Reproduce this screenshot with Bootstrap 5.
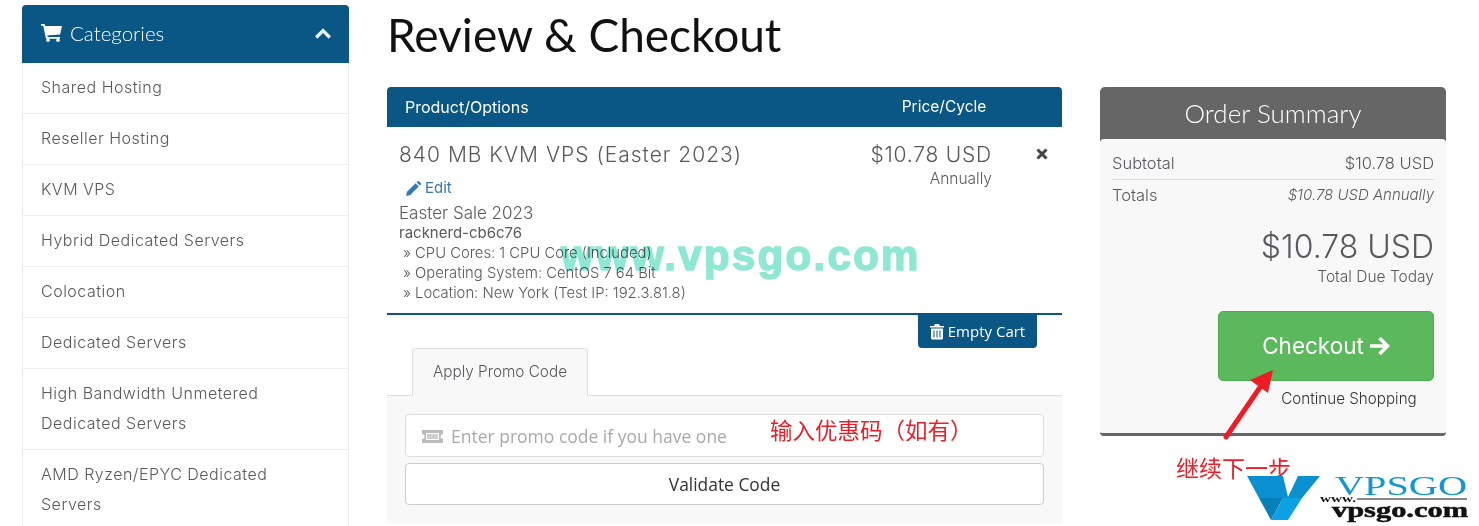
<!DOCTYPE html>
<html lang="en">
<head>
  <meta charset="UTF-8" />
  <meta name="viewport" content="width=device-width, initial-scale=1.0"/>
  <title>Review &amp; Checkout</title>
  <link href="https://cdn.jsdelivr.net/npm/bootstrap@5.3.0/dist/css/bootstrap.min.css" rel="stylesheet"/>
  <style>
    html, body { height: 526px; overflow: hidden; background: #fff; }
    body { font-family: Inter, "Noto Sans", sans-serif; font-weight: 300; color: #58595b; font-size: 16px; position: relative; }
    .page-wrap { padding-left: 22px; padding-top: 5px; gap: 38px; }

    .side-col { width: 327px; flex: none; }
    .side-head { height: 58px; background: #0a5685; color: #fff; border-radius: 4px 4px 0 0; padding: 0 18px 2px 19px; font-size: 20.5px; font-family: Lato, sans-serif; font-weight: 300; }
    .side-link { padding: 9px 18px 0; line-height: 30px; height: 51px; border: solid #eee; border-width: 0 1px 1px; box-sizing: border-box; font-size: 16px; letter-spacing: .5px; color: #58595b; }
    .side-link.tall { height: 81px; }

    .main-col { width: 1059px; flex: none; }
    .page-title { font-family: Lato, sans-serif; font-weight: 400; font-size: 46px; line-height: 60px; margin: 0 0 22px; color: #111; }
    .cart-col { width: 675px; flex: none; }
    .cart-head { height: 40px; background: #0a5685; color: #fff; border-radius: 4px 4px 0 0; padding: 0 18px; font-size: 16px; font-weight: 400; }
    .price-head { width: 130px; text-align: center; margin-right: 35px; font-size: 15.5px; }
    .cart-row { height: 188px; border-bottom: 2px solid #0a5685; padding: 15px 12px 0; }
    .prod-name { font-size: 21px; letter-spacing: 1px; line-height: 26px; }
    .edit-link { color: #337ab7; font-size: 15px; padding: 10px 0 0 7px; line-height: 20px; font-weight: 400; }
    .prod-group { font-size: 17px; line-height: 20px; margin-top: 5px; }
    .prod-domain { font-size: 15px; line-height: 19px; font-weight: 400; }
    .prod-opt { font-size: 14.8px; line-height: 20px; padding-left: 4px; }
    .prod-opt.first { margin-top: 1px; }
    .price-box { width: 150px; text-align: right; margin-right: 58px; }
    .price-main { font-size: 21px; letter-spacing: .8px; line-height: 26px; }
    .price-cycle { font-size: 15.5px; line-height: 22px; }
    .remove-x { position: absolute; top: 21px; right: 14px; }
    .empty-btn { width: 119px; height: 33px; margin-right: 25px; background: #0a5685; color: #fff; border-radius: 0 0 4px 4px; font-size: 15px; font-weight: 400; font-family: "Open Sans", sans-serif; }
    .promo-tabs { padding-left: 25px; border-bottom: 1px solid #ddd; height: 48px; }
    .promo-tab { width: 176px; height: 48px; background: #f8f8f8; border: 1px solid #ddd; border-bottom: 0; border-radius: 4px 4px 0 0; font-size: 15.3px; }
    .promo-body { background: #f8f8f8; padding: 18px; height: 128px; }
    .promo-input { height: 43px; background: #fff; border: 1px solid #ddd; border-radius: 4px; padding: 2px 0 0 16px; margin-bottom: 6px; color: #a9a9a9; font-family: "Open Sans", sans-serif; font-weight: 400; font-size: 17.5px; }
    .promo-btn { height: 42px; background: #fff; border: 1px solid #ccc; border-radius: 4px; padding-top: 1px; color: #333; font-family: "Open Sans", sans-serif; font-weight: 400; font-size: 17.4px; }

    .sum-col { width: 346px; flex: none; }
    .sum-head { height: 56px; padding-bottom: 4px; margin-bottom: -4px; background: #666; color: #fff; border-radius: 5px 5px 0 0; font-family: Lato, sans-serif; font-weight: 300; font-size: 26px; }
    .sum-body { height: 297px; background: #f8f8f8; border-bottom: 3px solid #666; border-radius: 4px; padding: 13px 12px 0; position: relative; }
    .sum-line { font-size: 16.5px; line-height: 22px; }
    .sum-line em { font-size: 15px; }
    .sum-line.first { border-bottom: 1px solid #ddd; height: 28px; }
    .sum-line.second { padding-top: 4px; }
    .sum-total { text-align: right; font-size: 32px; line-height: 40px; margin-top: 21px; }
    .sum-due { text-align: right; font-size: 15.5px; line-height: 20px; }
    .go-btn { width: 216px; height: 70px; margin: 24px 0 0 auto; background: #5cb85c; border: 1px solid #4cae4c; border-radius: 5px; color: #fff; font-size: 22.5px; font-weight: 400; gap: 5px; }
    .go-more { width: 216px; margin-left: auto; padding-left: 46px; text-align: center; font-size: 15.2px; line-height: 20px; margin-top: 8px; color: #333; }

    .watermark { position: absolute; left: 561px; top: 229px; font-family: "Liberation Sans", sans-serif; font-weight: 700; font-size: 42px; line-height: 54px; letter-spacing: 2.3px; color: #8ee8d3; -webkit-text-stroke: 1.5px #8ee8d3; mix-blend-mode: multiply; }
    .note-red { position: absolute; color: #ee1c25; font-family: "Noto Sans CJK SC", sans-serif; font-weight: 400; font-size: 22.5px; line-height: 28px; white-space: nowrap; }
    .note-promo { left: 770px; top: 415px; }
    .note-next { left: 1176px; top: 453px; font-size: 23px; text-shadow: 0 0 2px #fff; }
    .arrow-red { position: absolute; left: 1218px; top: 365px; }
    .logo-mark { position: absolute; left: 1247px; top: 472px; }
  </style>
</head>
<body>
  <div class="d-flex page-wrap">
    <div class="side-col">
      <div class="side-head d-flex align-items-center justify-content-between">
        <div class="d-flex align-items-center gap-2">
          <svg width="21" height="18" viewBox="0 0 21 18" fill="#fff"><path d="M0 0h3.6l.6 2H21l-1.9 8.4-12.8 1.1.4 1.5H19v1.8H5L2.2 1.8H0z"/><circle cx="7" cy="16.2" r="1.8"/><circle cx="17" cy="16.2" r="1.8"/></svg>
          <span>Categories</span>
        </div>
        <svg width="16" height="11" viewBox="0 0 16 11" fill="none" stroke="#e8eef2" stroke-width="3.4"><path d="M1.2 9.5 8 2.6l6.8 6.9"/></svg>
      </div>
      <div class="side-link">Shared Hosting</div>
      <div class="side-link">Reseller Hosting</div>
      <div class="side-link">KVM VPS</div>
      <div class="side-link">Hybrid Dedicated Servers</div>
      <div class="side-link">Colocation</div>
      <div class="side-link">Dedicated Servers</div>
      <div class="side-link tall">High Bandwidth Unmetered Dedicated Servers</div>
      <div class="side-link tall">AMD Ryzen/EPYC Dedicated Servers</div>
    </div>

    <div class="main-col">
      <h1 class="page-title">Review &amp; Checkout</h1>
      <div class="d-flex justify-content-between">
        <div class="cart-col">
          <div class="cart-head d-flex align-items-center justify-content-between">
            <span>Product/Options</span>
            <span class="price-head">Price/Cycle</span>
          </div>
          <div class="cart-row d-flex justify-content-between position-relative">
            <div>
              <div class="prod-name">840 MB KVM VPS (Easter 2023)</div>
              <div class="edit-link d-flex align-items-center gap-1">
                <svg width="15" height="15" viewBox="0 0 15 15" fill="#337ab7"><path d="M0 15l1-4.2 8.6-8.6 3.2 3.2L4.2 14zM10.6 1.2l1-1a1 1 0 0 1 1.3 0l1.9 1.9a1 1 0 0 1 0 1.3l-1 1z"/></svg>
                <span>Edit</span>
              </div>
              <div class="prod-group">Easter Sale 2023</div>
              <div class="prod-domain">racknerd-cb6c76</div>
              <div class="prod-opt first">» CPU Cores: 1 CPU Core (Included)</div>
              <div class="prod-opt">» Operating System: CentOS 7 64 Bit</div>
              <div class="prod-opt">» Location: New York (Test IP: 192.3.81.8)</div>
            </div>
            <div class="price-box">
              <div class="price-main">$10.78 USD</div>
              <div class="price-cycle">Annually</div>
            </div>
            <svg class="remove-x" width="12" height="12" viewBox="0 0 12 12" stroke="#444" stroke-width="3"><path d="M1.5 1.5l9 9M10.5 1.5l-9 9"/></svg>
          </div>
          <div class="d-flex justify-content-end">
            <div class="empty-btn d-flex align-items-center justify-content-center gap-1">
              <svg width="14" height="17" viewBox="0 0 14 16" fill="#fff"><path d="M0 2.5h4l1-2h4l1 2h4V4H0zM1 5h12v9.5a1.5 1.5 0 0 1-1.5 1.5h-9A1.5 1.5 0 0 1 1 14.5zM3.5 7v7h1V7zm3 0v7h1V7zm3 0v7h1V7z" fill-rule="evenodd"/></svg>
              <span>Empty Cart</span>
            </div>
          </div>
          <div class="promo-tabs">
            <div class="promo-tab d-flex align-items-center justify-content-center">Apply Promo Code</div>
          </div>
          <div class="promo-body">
            <div class="promo-input d-flex align-items-center gap-2">
              <svg width="21" height="15" viewBox="0 0 21 15" fill="#bbb"><path d="M0 1h21v4a2.5 2.5 0 0 0 0 5v4H0v-4a2.5 2.5 0 0 0 0-5zM4 4v7h13V4z" fill-rule="evenodd"/><rect x="5" y="5" width="11" height="5" opacity=".7"/></svg>
              <span>Enter promo code if you have one</span>
            </div>
            <div class="promo-btn d-flex align-items-center justify-content-center">Validate Code</div>
          </div>
        </div>

        <div class="sum-col">
          <div class="sum-head d-flex align-items-center justify-content-center">Order Summary</div>
          <div class="sum-body">
            <div class="sum-line first d-flex justify-content-between"><span>Subtotal</span><span>$10.78 USD</span></div>
            <div class="sum-line second d-flex justify-content-between"><span>Totals</span><em>$10.78 USD Annually</em></div>
            <div class="sum-total">$10.78 USD</div>
            <div class="sum-due">Total Due Today</div>
            <div class="go-btn d-flex align-items-center justify-content-center">
              <span>Checkout</span>
              <svg width="21" height="20" viewBox="0 0 21 20" fill="none" stroke="#fff" stroke-width="3.6"><path d="M1 10h17M10.5 2l8 8-8 8"/></svg>
            </div>
            <div class="go-more">Continue Shopping</div>
          </div>
        </div>
      </div>
    </div>
  </div>

  <div class="watermark">www.vpsgo.com</div>
  <div class="note-red note-promo">输入优惠码（如有）</div>
  <div class="note-red note-next">继续下一步</div>
  <svg class="arrow-red" width="64" height="78" viewBox="0 0 64 78"><path d="M8 72 45 18" stroke="#ee1c25" stroke-width="5" stroke-linecap="round"/><path d="M55 5 32 15l18 13z" fill="#ee1c25"/></svg>
  <svg class="logo-mark" width="232" height="54" viewBox="0 0 232 54">
    <path d="M0 4h36l5 21L51 4h22L55 26H12z" fill="#0a8fd0"/>
    <path d="M12 26h24L24 48z" fill="#077fb8"/>
    <path d="M36 26h19L41 48H24z" fill="#0ca1e5"/>
    <text x="88" y="23" font-family="Liberation Serif, serif" font-size="28" fill="#1097d6" textLength="132" lengthAdjust="spacingAndGlyphs">VPSGO</text>
    <text x="73" y="30" font-family="Liberation Serif, serif" font-size="10" font-weight="700" fill="#111" textLength="36" lengthAdjust="spacingAndGlyphs">www.</text>
    <path d="M110 27h110" stroke="#111" stroke-width="1"/>
    <text x="85" y="45" font-family="Liberation Serif, serif" font-size="20" font-weight="700" fill="#111" stroke="#111" stroke-width=".5" textLength="136" lengthAdjust="spacingAndGlyphs">vpsgo.com</text>
  </svg>
  <script src="https://cdn.jsdelivr.net/npm/bootstrap@5.3.0/dist/js/bootstrap.bundle.min.js"></script>
</body>
</html>
